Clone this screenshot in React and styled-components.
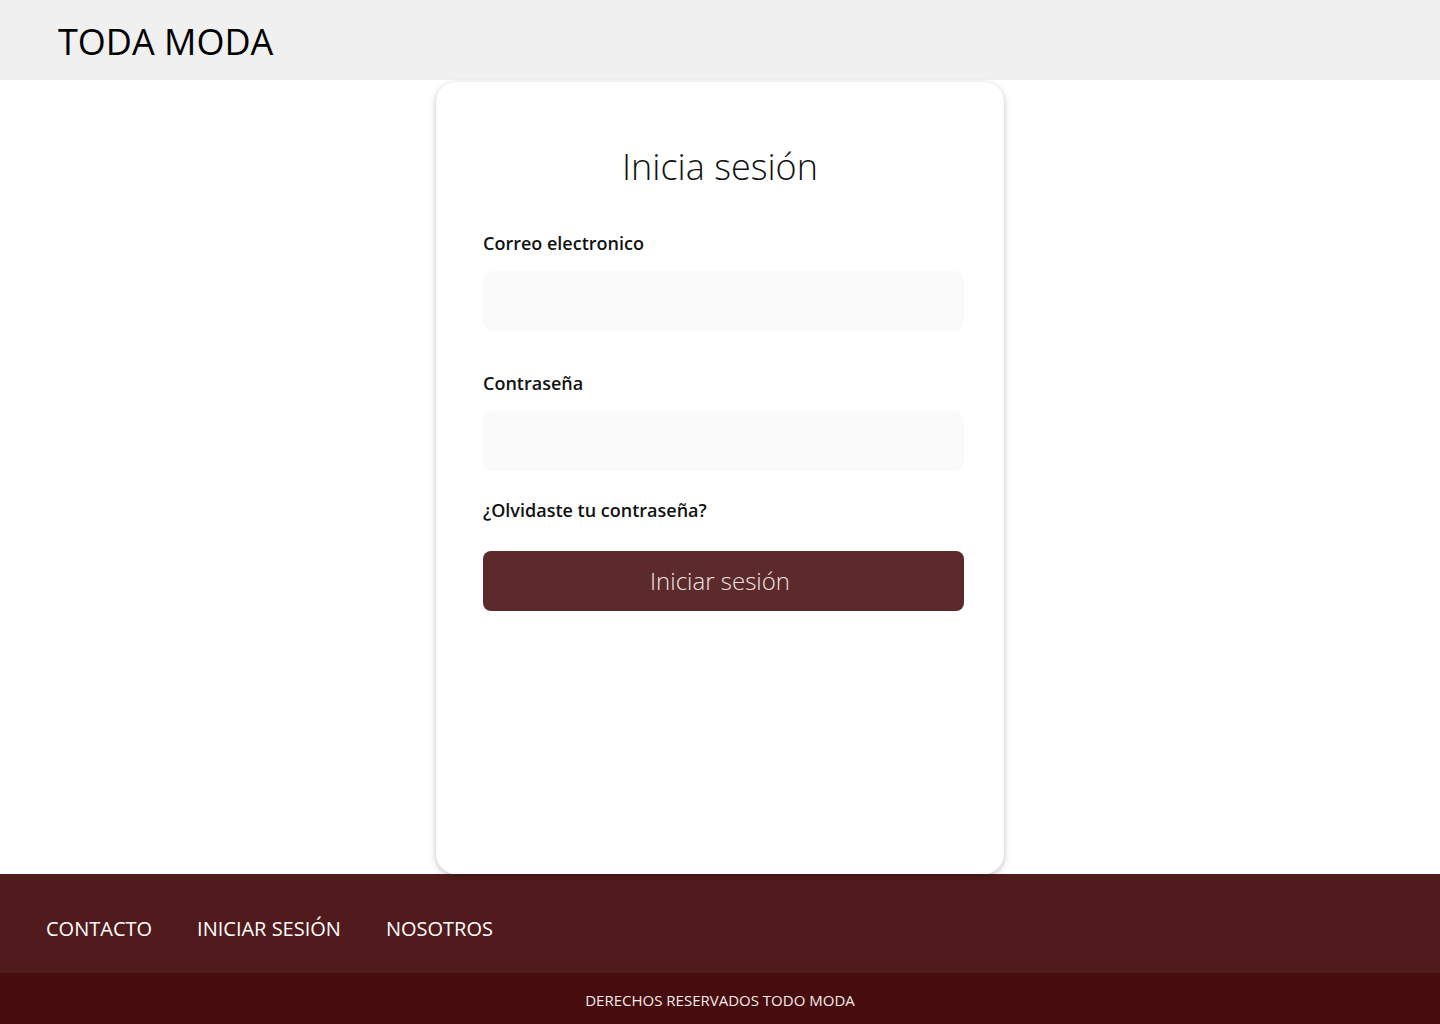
import React from 'react';
import styled, { createGlobalStyle } from 'styled-components';

const GlobalStyle = createGlobalStyle`
  * {
    box-sizing: border-box;
  }

  body {
    margin: 0;
    font-family: 'Open Sans', 'Liberation Sans', sans-serif;
    background: #ffffff;
    color: #000000;
  }
`;

const Page = styled.div`
  min-height: 1024px;
  display: flex;
  flex-direction: column;
`;

const Header = styled.header`
  height: 80px;
  background: #f0f0f0;
  display: flex;
  align-items: center;
  padding: 4px 0 0 58px;
`;

const Brand = styled.h1`
  margin: 0;
  font-size: 36px;
  font-weight: 400;
  line-height: 1;
  color: #000;
`;

const Main = styled.main`
  display: flex;
  justify-content: center;
  padding-top: 2px;
`;

const Card = styled.section`
  position: relative;
  z-index: 1;
  width: 568px;
  height: 792px;
  background: #ffffff;
  border-radius: 20px;
  box-shadow: 0 2px 6px rgba(0, 0, 0, 0.25);
  padding: 61px 40px 0 47px;
  display: flex;
  flex-direction: column;
`;

const Title = styled.h2`
  margin: 0 0 0 -7px;
  font-size: 36px;
  font-weight: 300;
  line-height: 48px;
  text-align: center;
  color: #111;
`;

const Label = styled.label`
  display: block;
  margin-top: ${(p) => p.$top}px;
  font-size: 18px;
  font-weight: 600;
  line-height: 24px;
  color: #111;
`;

const Input = styled.input`
  display: block;
  width: 481px;
  height: 60px;
  margin-top: 15.5px;
  border: none;
  border-radius: 10px;
  background: #fafafa;
  font-family: inherit;
  font-size: 18px;
  padding: 0 16px;
  outline: none;
`;

const ForgotLink = styled.a`
  display: block;
  margin-top: 27.5px;
  font-size: 18px;
  font-weight: 600;
  line-height: 24px;
  color: #111;
  text-decoration: none;
  cursor: pointer;
`;

const SubmitButton = styled.button`
  width: 481px;
  height: 60px;
  margin-top: 28.5px;
  padding: 0 7px 0 0;
  border: none;
  border-radius: 8px;
  background: #5c2a2a;
  color: #ece4e4;
  font-family: inherit;
  font-size: 24px;
  font-weight: 300;
  cursor: pointer;
`;

const Footer = styled.footer`
  display: flex;
  flex-direction: column;
`;

const FooterNav = styled.nav`
  height: 99px;
  background: #511b1d;
  display: flex;
  align-items: center;
  gap: 45px;
  padding: 10px 0 0 46px;
`;

const FooterLink = styled.a`
  color: #ffffff;
  font-size: 20px;
  font-weight: 400;
  text-decoration: none;
  cursor: pointer;
`;

const Copyright = styled.div`
  height: 51px;
  background: #470d0e;
  color: #f2eaea;
  font-size: 15px;
  padding-top: 2px;
  display: flex;
  align-items: center;
  justify-content: center;
`;

const App = () => {
  return (
    <Page>
      <GlobalStyle />
      <Header>
        <Brand>TODA MODA</Brand>
      </Header>
      <Main>
        <Card>
          <Title>Inicia sesión</Title>
          <Label $top={40} htmlFor="email">Correo electronico</Label>
          <Input id="email" type="email" />
          <Label $top={40.5} htmlFor="password">Contraseña</Label>
          <Input id="password" type="password" />
          <ForgotLink>¿Olvidaste tu contraseña?</ForgotLink>
          <SubmitButton>Iniciar sesión</SubmitButton>
        </Card>
      </Main>
      <Footer>
        <FooterNav>
          <FooterLink>CONTACTO</FooterLink>
          <FooterLink>INICIAR SESIÓN</FooterLink>
          <FooterLink>NOSOTROS</FooterLink>
        </FooterNav>
        <Copyright>DERECHOS RESERVADOS TODO MODA</Copyright>
      </Footer>
    </Page>
  );
};

export default App;
